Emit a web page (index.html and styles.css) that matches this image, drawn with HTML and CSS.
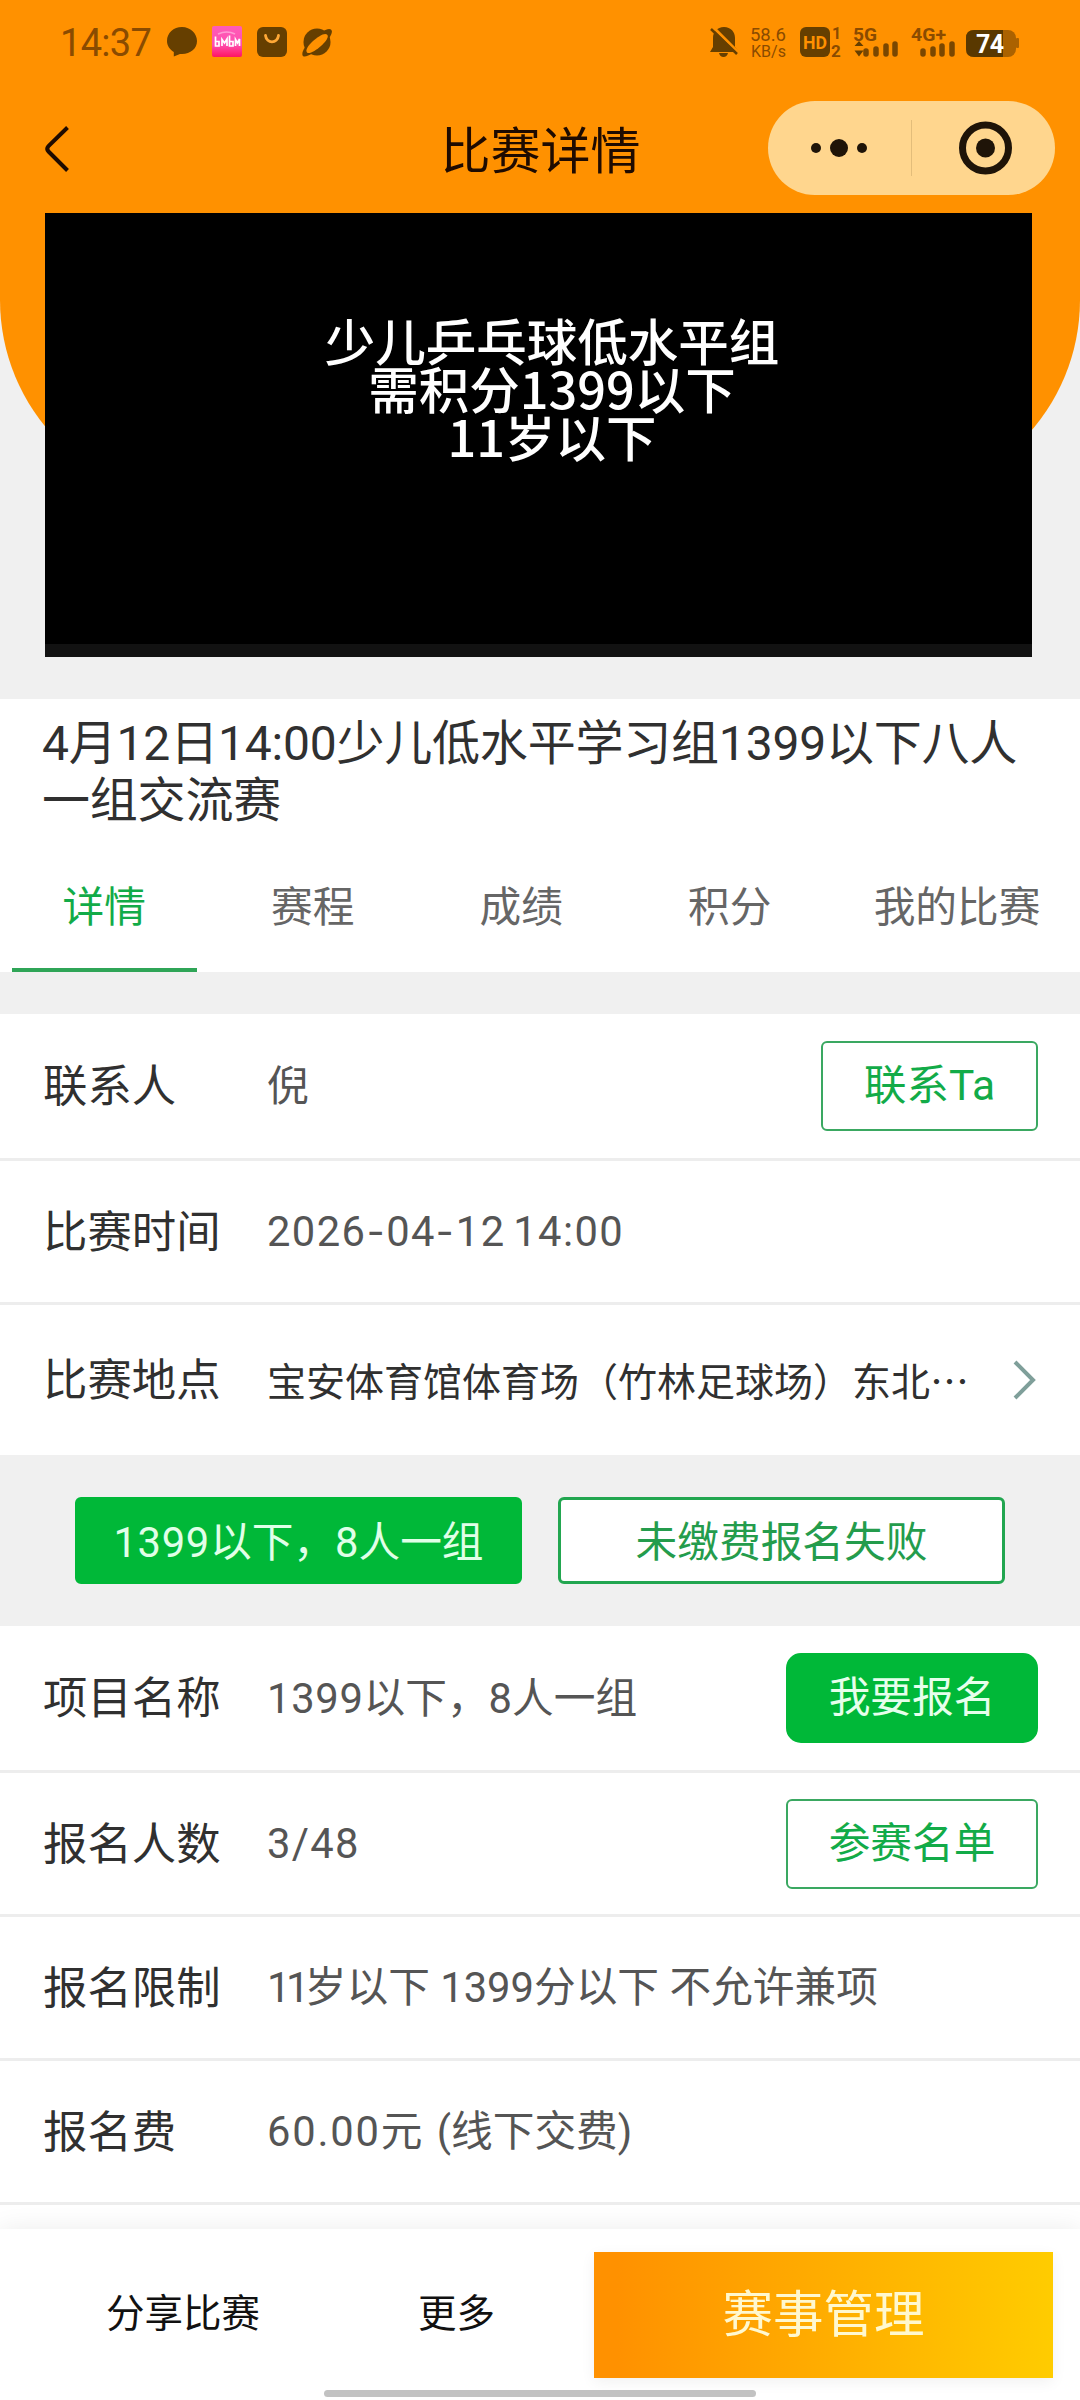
FILE: index.html
```html
<!DOCTYPE html>
<html lang="zh-CN">
<head>
<meta charset="UTF-8">
<title>比赛详情</title>
<link rel="stylesheet" href="styles.css">
</head>
<body>
<div class="page">
  <header class="hero">
    <div class="status">
      <span class="clock">14:37</span>
      <svg class="status-apps" width="168" height="34" viewBox="0 0 168 34">
        <path d="M17 3C8.500 3 2 9 2 17c0 4.500 2.600 8.400 6.800 11v4.500l6.200-2.500h2c8.500 0 15-5.500 15-13S25.500 3 17 3z" fill="#663f00"/>
        <defs><linearGradient id="pink" x1="0" y1="0" x2="0" y2="1"><stop offset="0" stop-color="#ff5cb8"/><stop offset=".6" stop-color="#ff4fb0"/><stop offset="1" stop-color="#ff1560"/></linearGradient></defs>
        <rect x="47" y="2" width="30" height="31" rx="2" fill="url(#pink)"/>
        <path d="M50.500 12.500v9.500h3.500v-4.500h-3.500M57 22v-6.500l2.500 3.500 2.500-4v7M64.500 11.500V22H68v-4.500h-3.500M70.500 22v-6.500l2 3.500 2-4v7" fill="none" stroke="#fff" stroke-width="1.700"/>
        <path d="M53 10q9-4 17 0" fill="none" stroke="#ff9bd3" stroke-width="1.500"/>
        <rect x="92" y="3" width="30" height="30" rx="6" fill="#663f00"/>
        <path d="M100.500 11.500c1 8.500 12 8.500 13 0" fill="none" stroke="#ffa836" stroke-width="2.800" stroke-linecap="round"/>
        <circle cx="152" cy="18" r="13.500" fill="#663f00"/>
        <path d="M138 32c-2.500-2.500 2-10.500 8.500-16.500S163 3 166 5.500s-2 10-8.500 16S140.500 34.500 138 32z" fill="#663f00"/>
        <path d="M142 28.500c-2-2 1-7 6-11.500s11.500-8.500 14-6.500-1 7-6 11.500-12 8.500-14 6.500z" fill="#ff9100"/>
      </svg>
      <svg class="status-system" width="316" height="40" viewBox="0 0 316 40">
        <g fill="#663f00">
          <path d="M19 3c7 0 11 5 11 11v9l4 5H5l3-5v-9C8 8 12 3 19 3zM14 29h9q-1 4-4.500 4T14 29z"/>
          <path d="M8 3l26 26" stroke="#ff9100" stroke-width="3"/>
          <path d="M6 5l26 25" stroke="#663f00" stroke-width="2.500"/>
          <rect x="95" y="3" width="30" height="30" rx="6"/>
          <path d="M149.500 22l4.500-5 4.500 5zM149.500 26.500l4.500 6 4.500-6z"/>
        </g>
        <g class="tiny">
          <text x="45" y="17" font-size="18.500" textLength="36">58.6</text>
          <text x="46" y="33" font-size="16" textLength="35">KB/s</text>
          <text x="127" y="15" font-size="16" font-weight="700">1</text>
          <text x="126" y="33" font-size="17" font-weight="700">2</text>
          <text x="148" y="17" font-size="19" font-weight="700" textLength="24" lengthAdjust="spacingAndGlyphs">5G</text>
          <text x="206" y="17" font-size="19" font-weight="700" textLength="35" lengthAdjust="spacingAndGlyphs">4G+</text>
        </g>
        <text class="tiny hd" x="98" y="24.500" font-size="18" font-weight="700" textLength="24" lengthAdjust="spacingAndGlyphs">HD</text>
        <g stroke="#7a4700" stroke-width="5.500" stroke-linecap="round">
          <path d="M161 27v3M171 25v5M181 22v8M190 20v10M218 27v3M228 25v5M237 22v8M247 20v10"/>
        </g>
        <rect x="261" y="6" width="50" height="27" rx="8" fill="#ab6200"/>
        <path d="M269 6h29v27h-29q-8 0-8-8V14q0-8 8-8z" fill="#593800"/>
        <rect x="311" y="14" width="3" height="10" rx="1" fill="#ab6200"/>
        <text class="charge" x="271" y="28.500" font-size="25" font-weight="700" textLength="28">74</text>
      </svg>
    </div>
    <div class="nav">
      <svg class="back" width="30" height="52" viewBox="0 0 30 52"><path d="M25.500 4.500L6.500 23q-2.500 3 0 5.500l19 19" fill="none" stroke="#1f0b00" stroke-width="4"/></svg>
      <h1 class="nav-title">比赛详情</h1>
      <svg class="capsule" width="287" height="94" viewBox="0 0 287 94">
        <rect width="287" height="94" rx="47" fill="#ffd68e"/>
        <g fill="#1f1408"><circle cx="48" cy="47" r="5"/><circle cx="71" cy="47" r="9"/><circle cx="94" cy="47" r="5"/><circle cx="217.500" cy="47" r="9.500"/></g>
        <path d="M143.500 19v56" stroke="#e3bd7a"/>
        <circle cx="217.500" cy="47" r="23" fill="none" stroke="#1f1408" stroke-width="7"/>
      </svg>
    </div>
    <div class="banner">
      <p>少儿乒乓球低水平组<br>需积分1399以下<br>11岁以下</p>
    </div>
  </header>

  <section class="heading">
    <h2>4月12日14:00少儿低水平学习组1399以下八人一组交流赛</h2>
    <nav class="tabs">
      <a class="tab active">详情</a><a class="tab">赛程</a><a class="tab">成绩</a><a class="tab">积分</a><a class="tab wide">我的比赛</a>
    </nav>
  </section>

  <section class="rows">
    <div class="row"><span class="label">联系人</span><span class="value">倪</span><a class="btn contact">联系Ta</a></div>
    <div class="row"><span class="label">比赛时间</span><span class="value date">2026<span class="dash">-</span>04<span class="dash">-</span>12 14:00</span></div>
    <div class="row place"><span class="label">比赛地点</span><span class="value address">宝安体育馆体育场（竹林足球场）东北⋯</span>
      <svg class="go" width="26" height="42" viewBox="0 0 26 42"><path d="M3 3l18 18L3 39" fill="none" stroke="#7f9f9a" stroke-width="4"/></svg>
    </div>
  </section>

  <section class="chips">
    <a class="chip selected"><span class="digits">1399</span>以下，8人一组</a>
    <a class="chip">未缴费报名失败</a>
  </section>

  <section class="rows">
    <div class="row"><span class="label">项目名称</span><span class="value"><span class="digits">1399</span>以下，8人一组</span><a class="btn solid">我要报名</a></div>
    <div class="row"><span class="label">报名人数</span><span class="value count">3/48</span><a class="btn">参赛名单</a></div>
    <div class="row"><span class="label">报名限制</span><span class="value"><span class="eleven">11</span>岁以下 1399分以下 不允许兼项</span></div>
    <div class="row"><span class="label">报名费</span><span class="value fee"><span class="amount">60.00</span>元 (线下交费)</span></div>
  </section>

  <footer class="footer">
    <a class="foot-link share">分享比赛</a>
    <a class="foot-link more">更多</a>
    <a class="manage">赛事管理</a>
    <span class="home-bar"></span>
  </footer>
</div>
</body>
</html>
```
FILE: styles.css
```css
* { box-sizing: border-box; }

body {
  margin: 0;
  font-family: Roboto, "Noto Sans CJK SC", sans-serif;
  color: #303030;
}

h1, h2, p { margin: 0; font-weight: 400; }

.page {
  width: 1080px;
  height: 2400px;
  display: flex;
  flex-direction: column;
  overflow: hidden;
  background: #fff;
}

.hero {
  height: 699px;
  flex: none;
  background: #f0f0f0;
  position: relative;
  z-index: 0;
}

.hero::before {
  content: "";
  position: absolute;
  inset: 0 0 auto;
  height: 500px;
  z-index: -1;
  background: #ff9100;
  border-radius: 0 0 200px 200px;
}

.status {
  height: 84px;
  padding: 24px 59px 0 60px;
  display: flex;
  align-items: flex-start;
}

.clock {
  width: 105px;
  font-size: 38px;
  line-height: 38px;
  letter-spacing: -0.7px;
  color: #8a4b00;
}

.status-system { margin-left: auto; }
.tiny { fill: #8a4b00; font-family: Roboto, sans-serif; }
.tiny.hd { fill: #ff9100; }
.charge { fill: #fff; font-family: Roboto, sans-serif; }

.nav {
  height: 129px;
  padding: 17px 25px 0 42px;
  display: grid;
  grid-template-columns: 271px 1fr 287px;
  align-items: start;
}

.back { margin-top: 22px; }

.nav-title {
  margin-top: 16px;
  text-align: center;
  font-size: 50px;
  line-height: 70px;
  color: #1f0b00;
}

.banner {
  width: 987px;
  height: 444px;
  margin-left: 45px;
  padding: 102px 0 0 27px;
  background: #000;
  border-bottom: 13px solid #121212;
  color: #fff;
  text-align: center;
  font-family: "Noto Sans CJK SC", sans-serif;
  font-weight: 500;
  font-size: 50.5px;
  line-height: 48px;
}

.banner p { font-weight: 500; }

.heading {
  height: 273px;
  flex: none;
}

.heading h2 {
  height: 144px;
  padding: 16px 40px 0 42px;
  font-size: 48px;
  line-height: 57px;
  letter-spacing: -0.2px;
}

.tabs {
  height: 129px;
  display: flex;
}

.tab {
  width: 208.500px;
  padding-top: 34px;
  position: relative;
  text-align: center;
  font-size: 41.700px;
  line-height: 62px;
  color: #666;
}

.tab.wide { width: 246px; }
.tab.active { color: #12ab48; }

.tab.active::after {
  content: "";
  position: absolute;
  left: 12px;
  right: 12px;
  bottom: 0;
  height: 4px;
  background: #2fa557;
}

.rows { flex: none; }

.heading + .rows { border-top: 42px solid #f0f0f0; }

.row {
  height: 144px;
  padding: 0 42px 0 43px;
  display: flex;
  align-items: center;
  border-bottom: 3px solid #ededed;
}

.rows .row:first-child { height: 147px; }
.rows .row.place { height: 150px; border-bottom: 0; }

.label {
  width: 224px;
  flex: none;
  padding-top: 2px;
  font-size: 44.400px;
  line-height: 64px;
}

.value {
  flex: 1;
  padding-top: 1px;
  font-size: 41.700px;
  line-height: 62px;
  color: #555;
  white-space: pre;
}

.date {
  letter-spacing: 1.400px;
  word-spacing: -4px;
}

.dash {
  display: inline-block;
  margin: 0 3.500px;
  transform: scaleX(1.25);
}

.digits { letter-spacing: 0.700px; }
.count { letter-spacing: 1.300px; }
.eleven { letter-spacing: -4.500px; }
.amount { letter-spacing: 1.800px; }
.fee { word-spacing: 4px; }

.address {
  padding: 0 0 3px;
  font-family: "Noto Sans CJK SC", sans-serif;
  font-size: 39px;
  color: #303030;
}

.go { flex: none; }

.btn {
  width: 252px;
  height: 90px;
  flex: none;
  border: 2px solid #3aa861;
  border-radius: 6px;
  text-align: center;
  font-size: 41.700px;
  line-height: 86px;
  color: #12ab48;
}

.btn.contact { width: 217px; font-size: 42.500px; }

.btn.solid {
  background: #00b838;
  border-color: #00b838;
  border-radius: 15px;
  color: #e6ffec;
}

.chips {
  height: 171px;
  flex: none;
  padding: 42px 75px 0;
  display: flex;
  justify-content: space-between;
  background: #f0f0f0;
}

.chip {
  width: 447px;
  height: 87px;
  border: 3px solid #22a650;
  border-radius: 6px;
  background: #fff;
  text-align: center;
  font-size: 41.700px;
  line-height: 86px;
  color: #249c4c;
}

.chip.selected {
  background: #00b838;
  border-color: #00b838;
  color: #e0ffe8;
}

.footer {
  height: 171px;
  flex: none;
  margin-top: 24px;
  padding: 23px 27px 0 106px;
  display: flex;
  align-items: flex-start;
  position: relative;
  background: #fff;
  box-shadow: 0 0 24px rgba(0, 0, 0, 0.08);
}

.foot-link {
  font-size: 38.500px;
  line-height: 124px;
  color: #111;
}

.share { width: 312px; }

.manage {
  width: 459px;
  height: 126px;
  margin-left: auto;
  background: linear-gradient(90deg, #ff9100 5%, #ffcc00);
  box-shadow: 0 4px 14px rgba(0, 0, 0, 0.06);
  text-align: center;
  font-size: 50.500px;
  line-height: 125px;
  color: #fff8cf;
}

.home-bar {
  position: absolute;
  left: 324px;
  bottom: 3px;
  width: 432px;
  height: 7px;
  border-radius: 4px;
  background: #c2c2c2;
}
```
